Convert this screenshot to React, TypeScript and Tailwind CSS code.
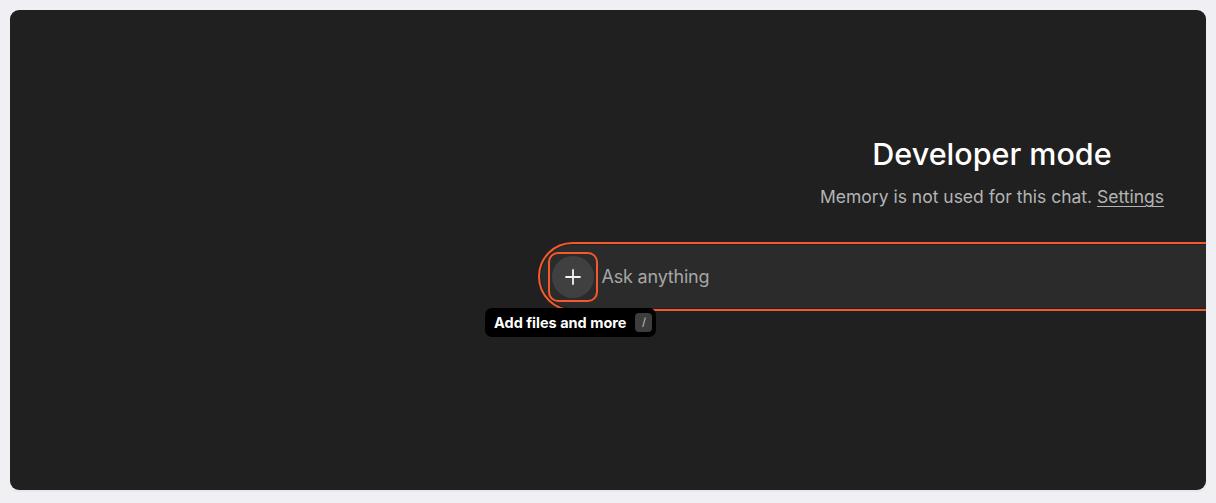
import React from "react";

export default function App() {
  return (
    <div
      className="w-[1216px] h-[503px] bg-[#f0eff4] pt-[10px] pl-[10px] pr-[10px] pb-[13px] flex"
      style={{ fontFamily: "Inter, 'Noto Sans', sans-serif" }}
    >
      <div className="flex-1 bg-[#202020] rounded-[9px] overflow-hidden flex shadow-[0_2px_2px_rgba(0,0,0,0.04)]">
        <div className="shrink-0 w-[528px]" />
        <div className="shrink-0 w-[908px] pt-[126px] flex flex-col items-center">
          <h1 className="text-[30.5px] leading-[36px] font-medium text-white">
            Developer mode
          </h1>
          <p className="mt-[13px] text-[17.5px] leading-[24px] text-[#b4b4b4]">
            Memory is not used for this chat.{" "}
            <span className="underline underline-offset-[3px] decoration-1">Settings</span>
          </p>
          <div className="relative mt-[33px] w-full">
            <div className="rounded-full border-[2.5px] border-[#f4592b] p-[1px]">
              <div className="h-[63px] rounded-full bg-[#2b2b2b] flex items-center pl-[6.5px]">
                <div className="w-[50px] h-[50px] rounded-[10px] border-2 border-[#f4592b] flex items-center justify-center">
                  <div className="w-[42px] h-[42px] rounded-full bg-[#404040] flex items-center justify-center">
                    <svg width="20" height="20" viewBox="0 0 20 20" fill="none">
                      <path d="M10 3v14M3 10h14" stroke="#f2f2f2" strokeWidth="1.8" strokeLinecap="round" />
                    </svg>
                  </div>
                </div>
                <span className="ml-[4px] text-[18px] text-[#a6a6a6] tracking-[-0.2px]">Ask anything</span>
              </div>
            </div>
            <div className="absolute left-[-53px] top-[66px] h-[29px] w-[171px] bg-black rounded-[7px] flex items-center pl-[9px]">
              <span className="text-[14.5px] font-bold text-white">Add files and more</span>
              <span className="ml-[9px] w-[17px] h-[19px] rounded-[4px] bg-[#3d3d3d] text-[#c4c4c4] text-[11px] flex items-center justify-center">
                /
              </span>
            </div>
          </div>
        </div>
      </div>
    </div>
  );
}
